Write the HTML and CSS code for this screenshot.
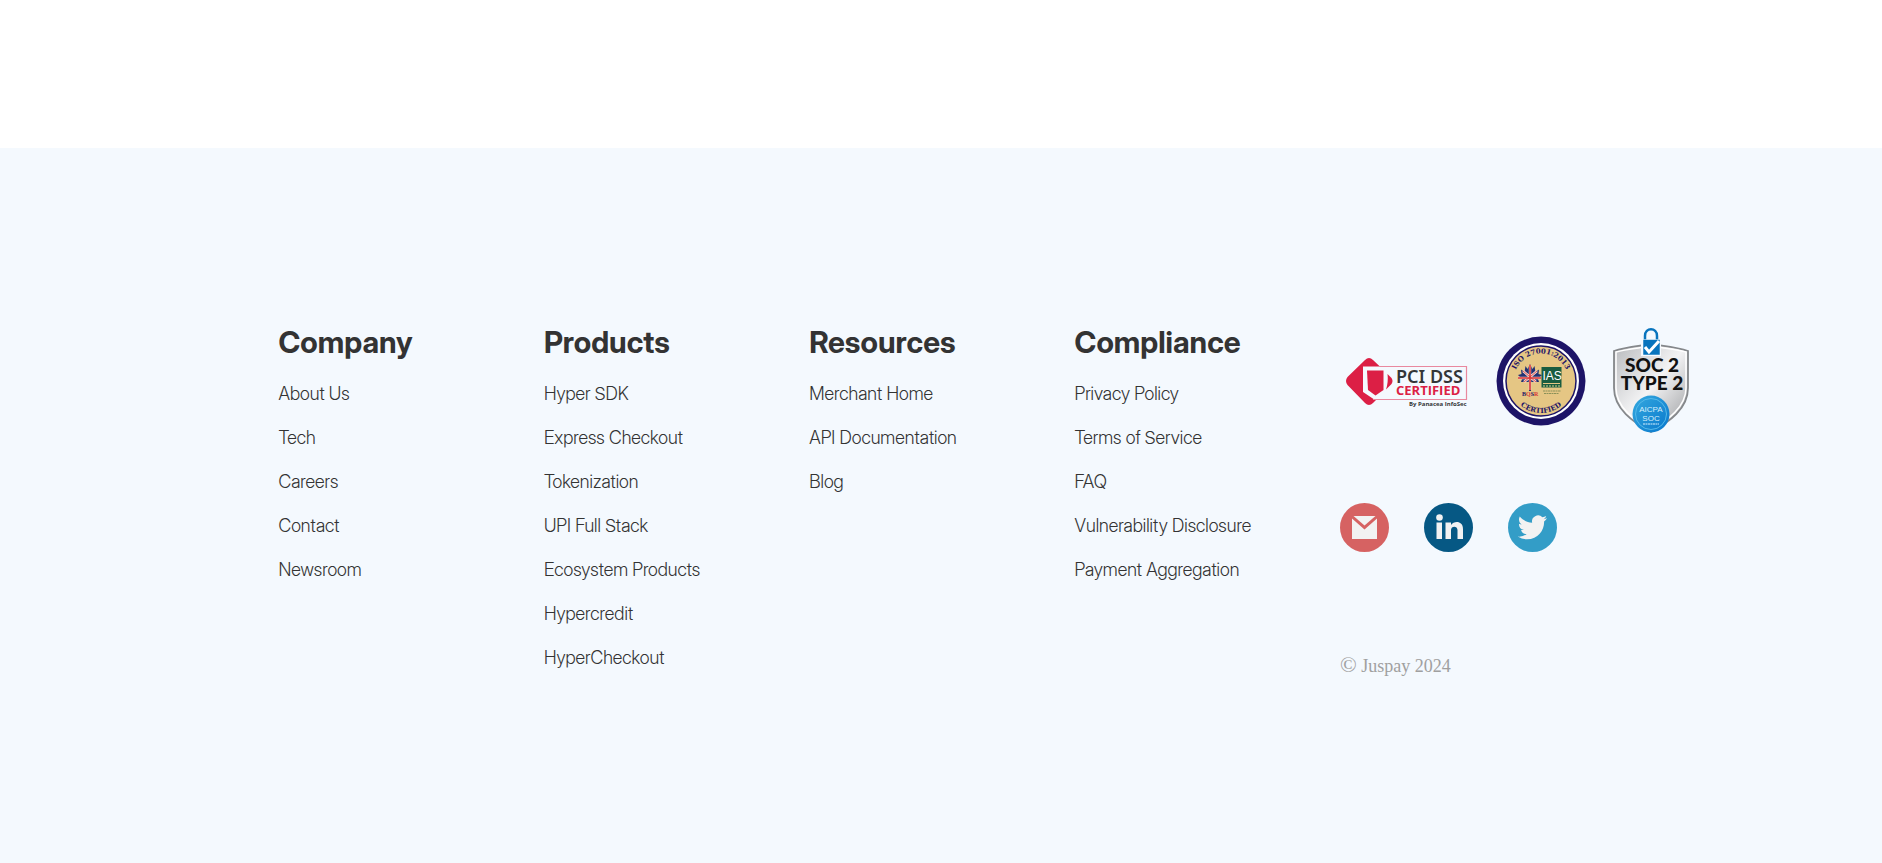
FILE: index.html
```html
<!DOCTYPE html>
<html lang="en">
<head>
<meta charset="utf-8">
<title>Juspay</title>
<link rel="stylesheet" href="styles.css">
</head>
<body>
<footer class="footer">
  <div class="footer-grid">
    <nav class="column" aria-labelledby="h-company">
      <h2 class="heading" id="h-company">Company</h2>
      <ul class="links">
        <li><a href="#">About Us</a></li>
        <li><a href="#">Tech</a></li>
        <li><a href="#">Careers</a></li>
        <li><a href="#">Contact</a></li>
        <li><a href="#">Newsroom</a></li>
      </ul>
    </nav>
    <nav class="column" aria-labelledby="h-products">
      <h2 class="heading" id="h-products">Products</h2>
      <ul class="links">
        <li><a href="#">Hyper SDK</a></li>
        <li><a href="#">Express Checkout</a></li>
        <li><a href="#">Tokenization</a></li>
        <li><a href="#">UPI Full Stack</a></li>
        <li><a href="#">Ecosystem Products</a></li>
        <li><a href="#">Hypercredit</a></li>
        <li><a href="#">HyperCheckout</a></li>
      </ul>
    </nav>
    <nav class="column" aria-labelledby="h-resources">
      <h2 class="heading" id="h-resources">Resources</h2>
      <ul class="links">
        <li><a href="#">Merchant Home</a></li>
        <li><a href="#">API Documentation</a></li>
        <li><a href="#">Blog</a></li>
      </ul>
    </nav>
    <nav class="column" aria-labelledby="h-compliance">
      <h2 class="heading" id="h-compliance">Compliance</h2>
      <ul class="links">
        <li><a href="#">Privacy Policy</a></li>
        <li><a href="#">Terms of Service</a></li>
        <li><a href="#">FAQ</a></li>
        <li><a href="#">Vulnerability Disclosure</a></li>
        <li><a href="#">Payment Aggregation</a></li>
      </ul>
    </nav>
    <div class="column about">
      <div class="badges">
        <svg class="badge-pci" viewBox="0 -2 124 52" role="img" aria-label="PCI DSS Certified">
          <path d="M20 3Q24 -1 28 3L46 20Q48.500 24 46 28L28 46Q24 50 20 46L2.500 28Q-.500 24 2.500 20Z" fill="#dc1f45"/>
          <path d="M18 9.500H122V43H30L18 35Z" fill="#f4f9fe"/>
          <path d="M30 9.500H121.500V42.500H28" fill="none" stroke="#e9899f" stroke-width="1.200"/>
          <path d="M42.500 17L46.500 21Q48.500 24 46.500 27L41 32.500Q43.500 25 42.500 17Z" fill="#dc1f45"/>
          <path d="M22 13.500H38.500V33L30.500 38.500L23 33Z" fill="#dc1f45"/>
          <text class="pci-name" x="51" y="26">PCI DSS</text>
          <text class="pci-cert" x="51" y="38">CERTIFIED</text>
          <text class="pci-by" x="64" y="49">By Panacea InfoSec</text>
        </svg>
        <svg class="badge-iso" viewBox="0 0 90 90" role="img" aria-label="ISO 27001:2013 Certified">
          <defs>
            <path id="arc-top" d="M17.500 45A27.500 27.500 0 0 1 72.500 45"/>
            <path id="arc-bottom" d="M13 45A32 32 0 0 0 77 45"/>
          </defs>
          <circle cx="45" cy="45" r="44.500" fill="#1d1467"/>
          <circle cx="45" cy="45" r="38" fill="#fff"/>
          <circle cx="45" cy="45" r="35" fill="#e5c684" stroke="#1d1467" stroke-width="1.500"/>
          <text class="iso-arc"><textPath href="#arc-top" startOffset="50%">ISO 27001:2013</textPath></text>
          <text class="iso-arc"><textPath href="#arc-bottom" startOffset="50%">CERTIFIED</textPath></text>
          <path d="M34 28L36.500 33L38.500 30L39.500 36L43 33.500L42.500 38L46 39L42 43L43 46L35 46V55H33V46L25 46L26 43L22 39L25.500 38L25 33.500L28.500 36L29.500 30L31.500 33Z" fill="#243373"/>
          <path d="M22 42H45M34 29V54M27 35L40 46M41 35L28 46" stroke="#f3d7d0" stroke-width="2.400"/>
          <path d="M22 42H45M34 29V54" stroke="#d93637" stroke-width="1.600"/>
          <path d="M27 35L40 46M41 35L28 46" stroke="#d93637" stroke-width=".800"/>
          <text class="iso-bqsr" x="26" y="60">B<tspan fill="#d93637">Q</tspan>S<tspan fill="#d93637">R</tspan></text>
          <path d="M45.500 31H65.500V51.500H45.500Z" fill="#195c40"/>
          <text class="iso-ias" x="46.500" y="44">IAS</text>
          <path d="M47 47.500H64" stroke="#e5c684" stroke-width="1"/>
          <path d="M47 50H64" stroke="#9cab70" stroke-width="1.500" stroke-dasharray="2 1"/>
          <path d="M47 55H65M48 57.500H63" stroke="#8b9158" stroke-width="1" stroke-dasharray="2 .5"/>
        </svg>
        <svg class="badge-soc" viewBox="0 0 76 106" role="img" aria-label="SOC 2 Type 2">
          <defs>
            <linearGradient id="silver" x1="0" y1="0" x2="1" y2="1">
              <stop offset="0" stop-color="#b7b9bc"/>
              <stop offset=".5" stop-color="#f3f3f4"/>
              <stop offset="1" stop-color="#96989b"/>
            </linearGradient>
            <linearGradient id="seal" x1="0" y1="0" x2="1" y2="1">
              <stop offset="0" stop-color="#35a9df"/>
              <stop offset="1" stop-color="#0877cc"/>
            </linearGradient>
          </defs>
          <path d="M38 16C27 18 12 19 1 23V60C1 81 20 94 38 104C56 94 75 81 75 60V23C64 19 49 18 38 16Z" fill="url(#silver)" stroke="#85888b" stroke-width="1.800"/>
          <path d="M38 18C27 20 13 21 3 24V60C3 79 21 92 38 102C55 92 73 79 73 60V24C63 21 49 20 38 18Z" fill="none" stroke="#fff" stroke-width="1.500"/>
          <path d="M28 9C28-2 48-2 48 9V28H28Z" fill="#f4f9fe"/>
          <path d="M32 14V8C32-1 44-1 44 8V14" fill="none" stroke="#0874bd" stroke-width="2.500"/>
          <path d="M30 11.500H47V27H30Z" fill="#0874bd" stroke="#fff" stroke-width=".500"/>
          <path d="M32 19L36 24L46 13" fill="none" stroke="#fff" stroke-width="3"/>
          <text class="soc-name" x="39" y="44">SOC 2</text>
          <text class="soc-name" x="39" y="62">TYPE 2</text>
          <circle cx="38" cy="86" r="18.500" fill="url(#seal)"/>
          <circle cx="38" cy="86" r="15.500" fill="none" stroke="#54b9e9" stroke-width="1"/>
          <text class="soc-seal" x="38" y="84">AICPA</text>
          <text class="soc-seal" x="38" y="93">SOC</text>
          <path d="M30 96H46" stroke="#d7effb" stroke-width="1.200" stroke-dasharray="2 .5"/>
        </svg>
      </div>
      <div class="social">
        <a href="#" aria-label="Email">
          <svg viewBox="0 0 49 49">
            <circle cx="24.500" cy="24.500" r="24.500" fill="#d66262"/>
            <path d="M12 15.500L24.500 26.500L37 15.500V36H12Z" fill="#f2f2f2"/>
            <path d="M13.500 13H35.500L24.500 22.500Z" fill="#f2f2f2"/>
          </svg>
        </a>
        <a href="#" aria-label="LinkedIn">
          <svg viewBox="0 0 49 49">
            <circle cx="24.500" cy="24.500" r="24.500" fill="#065884"/>
            <circle cx="15.500" cy="14.500" r="3.300" fill="#f2f2f2"/>
            <path d="M12.500 19.500H18V36H12.500ZM21.500 19.500H27V22C30 17.500 39 17.500 39 26V36H33.500V27C33.500 22.500 27 22.500 27 27V36H21.500Z" fill="#f2f2f2"/>
          </svg>
        </a>
        <a href="#" aria-label="Twitter">
          <svg viewBox="0 0 49 49">
            <circle cx="24.500" cy="24.500" r="24.500" fill="#339dc7"/>
            <path transform="translate(9.800 9.700) scale(1.220)" d="M23.953 4.570a10 10 0 0 1-2.825.775 4.958 4.958 0 0 0 2.163-2.723c-.951.555-2.005.959-3.127 1.184a4.920 4.920 0 0 0-8.384 4.482C7.690 8.095 4.067 6.130 1.640 3.162a4.822 4.822 0 0 0-.666 2.475c0 1.710.870 3.213 2.188 4.096a4.904 4.904 0 0 1-2.228-.616v.060a4.923 4.923 0 0 0 3.946 4.827 4.996 4.996 0 0 1-2.212.085 4.936 4.936 0 0 0 4.604 3.417 9.867 9.867 0 0 1-6.102 2.105c-.390 0-.779-.023-1.170-.067a13.995 13.995 0 0 0 7.557 2.209c9.053 0 13.998-7.496 13.998-13.985 0-.210 0-.420-.015-.630A9.935 9.935 0 0 0 24 4.590z" fill="#f2f2f2"/>
          </svg>
        </a>
      </div>
      <p class="copyright"><span class="mark">©</span> Juspay 2024</p>
    </div>
  </div>
</footer>
</body>
</html>
```
FILE: styles.css
```css
* { box-sizing: border-box; }

body {
  margin: 0;
  padding-top: 148px;
  min-height: 100vh;
  display: flex;
  flex-direction: column;
  background: #fff;
  color: #333;
  font-family: "Inter Display", Inter, "Liberation Sans", sans-serif;
  font-variation-settings: "opsz" 32;
}

.footer {
  flex: 1;
  padding: 176px 0 160px;
  background: #f4f9fe;
}

.footer-grid {
  width: 70.5%;
  margin-left: 14.8%;
  display: grid;
  grid-template-columns: repeat(5, minmax(0, 1fr));
}

.heading {
  margin: 0 0 12px;
  font-size: 30px;
  line-height: 36px;
  font-weight: 650;
}

.links {
  margin: 0;
  padding: 0;
  list-style: none;
  font-size: 18px;
  font-weight: 300;
  line-height: 44px;
  white-space: nowrap;
}

.links a {
  color: #333;
  text-decoration: none;
}

.badges {
  display: flex;
  align-items: center;
  gap: 27px;
  padding: 4px 0 0 5px;
}

.badges svg {
  flex: none;
  overflow: visible;
}

.badge-pci { width: 124px; height: 52px; }
.badge-iso { width: 90px; height: 90px; }
.badge-soc { width: 76px; height: 106px; }

.badges text { font-family: "Open Sans", sans-serif; font-weight: 700; }
.badges .pci-name { font-family: "Noto Sans", sans-serif; font-weight: 600; font-size: 18px; fill: #333638; }
.badges .pci-cert { font-size: 13px; fill: #dc1f45; }
.badges .pci-by { font-size: 6px; fill: #333638; }
.badges .iso-arc { font-family: "DejaVu Serif", serif; font-size: 7px; fill: #1d1467; text-anchor: middle; }
.badges .iso-bqsr { font-family: "Liberation Serif", serif; font-size: 6px; fill: #1d1467; }
.badges .iso-ias { font-family: "Liberation Sans", sans-serif; font-weight: 400; font-size: 12px; fill: #fff; }
.badges .soc-name { font-family: Lato, sans-serif; font-weight: 900; font-size: 19px; fill: #111; text-anchor: middle; }
.badges .soc-seal { font-family: "Liberation Sans", sans-serif; font-weight: 400; font-size: 8px; fill: #d7effb; text-anchor: middle; }

.social {
  display: flex;
  gap: 35px;
  margin-top: 69px;
}

.social svg {
  display: block;
  width: 49px;
  height: 49px;
}

.copyright {
  margin: 99px 0 0;
  color: #a0a0a0;
  font-family: "Liberation Serif", serif;
  font-size: 18px;
  line-height: 28px;
}

.mark { font-size: 22px; }
```
